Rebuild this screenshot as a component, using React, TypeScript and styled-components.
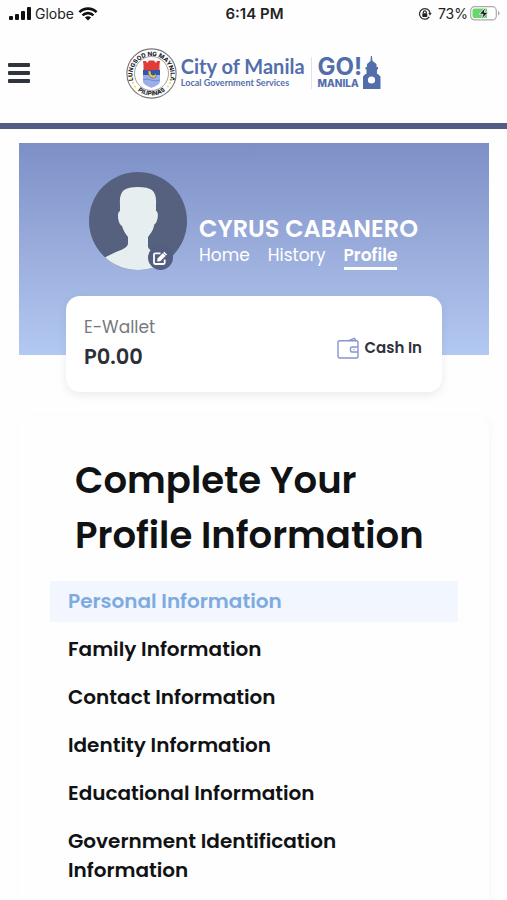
import React from "react";
import styled, { createGlobalStyle } from "styled-components";

const GlobalStyle = createGlobalStyle`
  *, *::before, *::after { box-sizing: border-box; }
  body {
    margin: 0;
    background: #fefefe;
    color: #101214;
    font-family: Poppins, Inter, sans-serif;
  }
  h1, h2, p, ul { margin: 0; padding: 0; }
  a { color: inherit; text-decoration: none; }
  button { font: inherit; color: inherit; border: 0; padding: 0; background: none; cursor: pointer; }
  svg { display: block; flex: none; }
`;

const StatusBar = styled.div`
  display: grid;
  grid-template-columns: 1fr auto 1fr;
  align-items: center;
  height: 27px;
  padding: 0 7px 0 9px;
  font-family: Inter, sans-serif;
  font-size: 14px;
  color: #222;
`;

const StatusGroup = styled.div<{ $end?: boolean }>`
  display: flex;
  align-items: center;
  justify-content: ${(p) => (p.$end ? "flex-end" : "flex-start")};
  gap: ${(p) => (p.$end ? 2 : 4)}px;
`;

const LockIconSlot = styled.span`
  margin-right: 4px;
`;

const Clock = styled.time`
  font-size: 15px;
  font-weight: 600;
`;

const Header = styled.header`
  display: grid;
  grid-template-columns: 1fr auto 1fr;
  align-items: center;
  height: 102px;
  padding: 0 8px 4px;
  border-bottom: 6px solid #535d82;
`;

const MenuButton = styled.button`
  justify-self: start;
`;

const Brand = styled.a`
  display: flex;
  align-items: center;
  color: #536fab;
  font-family: Lato, sans-serif;
  font-weight: 700;
`;

const CityName = styled.span`
  display: flex;
  flex-direction: column;
  margin-left: 4px;
  padding-right: 6px;
  white-space: nowrap;
`;

const CityTitle = styled.span`
  font-size: 20px;
  line-height: 20px;
  font-weight: 700;
`;

const CitySubtitle = styled.span`
  font-size: 9px;
  line-height: 14px;
`;

const GoManila = styled.span`
  display: flex;
  flex-direction: column;
  padding-left: 6px;
  border-left: 1px solid #dde2f0;
  font-family: Inter, sans-serif;
`;

const GoText = styled.span`
  font-size: 24px;
  line-height: 20px;
  font-weight: 700;
`;

const ManilaText = styled.span`
  font-size: 10px;
  line-height: 12px;
  font-weight: 800;
`;

const Main = styled.main`
  padding: 14px 18px 0 19px;
`;

const Hero = styled.section`
  display: flex;
  align-items: flex-start;
  gap: 12px;
  height: 212px;
  padding: 29px 20px 0 70px;
  color: #fff;
  background: linear-gradient(#7c90c7, #9aacdb 50%, #b2c9f2);
`;

const Avatar = styled.div`
  position: relative;
  flex: none;
`;

const EditButton = styled.button`
  position: absolute;
  right: 14px;
  bottom: 0;
  display: grid;
  place-items: center;
  width: 25px;
  height: 25px;
  border-radius: 50%;
  background: #535e80;
`;

const Identity = styled.div`
  padding-top: 42px;
  white-space: nowrap;
`;

const UserName = styled.h1`
  font-size: 24px;
  line-height: 29px;
  font-weight: 600;
`;

const Tabs = styled.nav`
  display: flex;
  gap: 18px;
`;

const Tab = styled.a<{ $active?: boolean }>`
  font-size: 17px;
  line-height: 24px;
  font-weight: ${(p) => (p.$active ? 600 : 400)};
  border-bottom: 3px solid ${(p) => (p.$active ? "#fff" : "transparent")};
`;

const Wallet = styled.section`
  position: relative;
  display: flex;
  align-items: center;
  justify-content: space-between;
  margin: -59px 47px 0;
  padding: 16px 20px 20px 18px;
  border-radius: 14px;
  background: #fff;
  box-shadow: 0 3px 8px rgba(60, 70, 100, 0.1);
`;

const WalletLabel = styled.p`
  font-size: 17px;
  line-height: 30px;
  color: #77797d;
`;

const Balance = styled.p`
  font-size: 21px;
  line-height: 30px;
  font-weight: 600;
  color: #2c3038;
`;

const CashIn = styled.button`
  display: flex;
  align-items: center;
  gap: 6px;
  padding-top: 12px;
  font-size: 15px;
  line-height: 22px;
  font-weight: 600;
  color: #2f333c;
`;

const ProfilePanel = styled.section`
  margin-top: 24px;
  padding: 37px 31px 24px;
  border-radius: 14px;
  background: #fefefe;
  box-shadow: 2px 3px 8px rgba(90, 120, 180, 0.05);
`;

const PanelTitle = styled.h2`
  padding: 0 25px;
  font-size: 37px;
  line-height: 55px;
  font-weight: 600;
  white-space: nowrap;
`;

const SectionList = styled.ul`
  display: flex;
  flex-direction: column;
  gap: 7px;
  margin-top: 18px;
  list-style: none;
`;

const SectionLink = styled.a<{ $active?: boolean }>`
  display: block;
  padding: 6px 90px 6px 18px;
  font-size: 20px;
  line-height: 29px;
  font-weight: 600;
  color: ${(p) => (p.$active ? "#7eabdf" : "#101214")};
  background: ${(p) => (p.$active ? "#f2f6fe" : "transparent")};
`;

const SignalIcon = () => (
  <svg width="22" height="14" viewBox="0 0 22 14" fill="#111" aria-hidden="true">
    <rect x="0" y="9" width="4" height="4" rx="1" />
    <rect x="6" y="7" width="4" height="6" rx="1" />
    <rect x="12" y="4" width="4" height="9" rx="1" />
    <rect x="18" y="0" width="4" height="13" rx="1" />
  </svg>
);

const WifiIcon = () => (
  <svg width="20" height="14" viewBox="0 0 20 14" fill="none" stroke="#111" strokeWidth="2.6" aria-hidden="true">
    <path d="M1.4 5.2C6.2.4 13.8.4 18.6 5.2M4.5 8.4c3.1-3 7.9-3 11 0" />
    <path d="M10 13.6 6.9 10.5c1.8-1.7 4.4-1.7 6.2 0Z" fill="#111" stroke="none" />
  </svg>
);

const RotationLockIcon = () => (
  <svg width="14" height="14" viewBox="0 0 14 14" fill="none" stroke="#333" strokeWidth="1.3" aria-hidden="true">
    <path d="M11.2 9.8A5.3 5.3 0 1 1 12 6" />
    <path d="m10.3 5.8 3.4.1-1.8 2.8Z" fill="#333" stroke="none" />
    <rect x="4.3" y="6.2" width="5" height="3.8" rx=".7" fill="#222" stroke="none" />
    <path d="M5.3 6.5V5.4a1.5 1.5 0 0 1 3 0v1.1" />
  </svg>
);

const BatteryIcon = () => (
  <svg width="30" height="15" viewBox="0 0 30 15" aria-hidden="true">
    <rect x=".7" y=".7" width="25.6" height="13.2" rx="4" fill="#fff" stroke="#aaa" strokeWidth="1.2" />
    <path d="M4.5 2.5H17v9.6H4.5a2 2 0 0 1-2-2V4.5a2 2 0 0 1 2-2Z" fill="#68d56e" />
    <path d="M28 5v4.500c2-.7 2-3.800 0-4.500Z" fill="#aaa" />
    <path d="m15.800 1.200-6.500 7h3.900l-2 5.300 7-7.200h-4Z" fill="#111" stroke="#fff" strokeWidth=".8" />
  </svg>
);

const MenuIcon = () => (
  <svg width="22" height="20" viewBox="0 0 22 20" fill="#30343e" aria-hidden="true">
    <rect y="0" width="22" height="4" rx="1" />
    <rect y="8" width="22" height="4" rx="1" />
    <rect y="16" width="22" height="4" rx="1" />
  </svg>
);

const CitySeal = () => (
  <svg width="51" height="51" viewBox="0 0 51 51" role="img" aria-label="Seal of Manila">
    <defs>
      <path id="sealTop" d="M7.500 33A19 19 0 1 1 43.500 33" />
      <path id="sealBottom" d="M6 36A22.300 22.300 0 0 0 45 36" />
    </defs>
    <circle cx="25.500" cy="25.500" r="24.600" fill="#fff" stroke="#777" strokeWidth="1.100" />
    <circle cx="25.500" cy="25.500" r="17" fill="#fff" stroke="#888" strokeWidth=".8" />
    <g fontFamily="Inter, sans-serif" fontSize="6" fontWeight="800" fill="#25282e" textAnchor="middle">
      <text><textPath href="#sealTop" startOffset="50%">LUNGSOD NG MAYNILA</textPath></text>
      <text><textPath href="#sealBottom" startOffset="50%">PILIPINAS</textPath></text>
    </g>
    <g fill="#e9de52">
      <circle cx="5" cy="31" r="1" /><circle cx="7" cy="35" r="1" /><circle cx="9" cy="38.500" r="1" />
      <circle cx="46" cy="31" r="1" /><circle cx="44" cy="35" r="1" /><circle cx="42" cy="38.500" r="1" />
    </g>
    <path d="M17.500 24v-7L17 13h3l1 2 2-2.500h5l2 2.500 1-2h3l-.500 4v7Z" fill="#df3c3a" />
    <path d="M17 22h17v5H17Z" fill="#325aa9" />
    <path d="M17 27h17v6c0 4-5 5-8.500 7C22 38 17 37 17 33Z" fill="#9cafe8" />
    <path d="M17 32q4-2 8 0t9 0" fill="none" stroke="#7189d4" />
    <path d="M22 23q2-1 3 1v2q3 3 5-1 1 6-3 5-5-1-5-7Z" fill="#f1c84a" stroke="#31446d" strokeWidth=".5" />
  </svg>
);

const ClockTower = () => (
  <svg width="19" height="34" viewBox="0 0 19 34" fill="#536fab" aria-hidden="true">
    <path d="M8.900 0h1l.6 5 4 3v3h1.500v2.500h-1V18h1l2.500 2.500V33H1V20.500L3.500 18h1v-4.500h-1V11H5V8l3.500-3Z" />
    <circle cx="9.500" cy="24" r="3.600" fill="#fff" />
  </svg>
);

const Portrait = () => (
  <svg width="98" height="98" viewBox="0 0 98 98" role="img" aria-label="Profile photo">
    <clipPath id="portraitClip"><circle cx="49" cy="49" r="49" /></clipPath>
    <circle cx="49" cy="49" r="49" fill="#56617f" />
    <path
      clipPath="url(#portraitClip)"
      fill="#e7eef0"
      d="M31 33C30 19 35 15 49 15s19 4 18 18v6c3 1 2 8 0 12-1 1-2 1-2 3-1 5-4 8-6 11v10c2 5 9 6 15 9 5 2 10 4 12 8v8H10v-9c5-6 11-8 17-11 5-2 11-4 12-8V65c-3-4-5-7-6-11-1-1-2-1-3-4-1-3-2-10 1-11Z"
    />
  </svg>
);

const EditIcon = () => (
  <svg width="15" height="14" viewBox="0 0 15 14" fill="none" stroke="#fff" strokeWidth="1.800" aria-hidden="true">
    <path d="M7.500 2.300H2.200Q1 2.300 1 3.500v8.300Q1 13 2.200 13h8.300q1.200 0 1.200-1.200V8.500" />
    <path d="m4.500 7.500 6.800-6.800 2.700 2.700-6.800 6.800-3 .4Z" fill="#fff" stroke="none" />
    <path d="m10 1.800 3 3" stroke="#56617f" strokeWidth=".7" />
  </svg>
);

const WalletIcon = () => (
  <svg width="22" height="22" viewBox="0 0 22 22" fill="none" stroke="#8794d2" strokeWidth="1.400" strokeLinejoin="round" aria-hidden="true">
    <rect x="1" y="3.800" width="20" height="17.200" rx="1.800" />
    <path d="m11 3.800 6.500-2.500 1.700 2.500M21 10h-6a1.500 1.500 0 0 0-1.500 1.500v2A1.500 1.500 0 0 0 15 15h6M16.500 12.500h1" />
  </svg>
);

const tabs = ["Home", "History", "Profile"];

const sections = [
  "Personal Information",
  "Family Information",
  "Contact Information",
  "Identity Information",
  "Educational Information",
  "Government Identification Information",
];

export default function App() {
  return (
    <>
      <GlobalStyle />
      <StatusBar>
        <StatusGroup>
          <SignalIcon />
          <span>Globe</span>
          <WifiIcon />
        </StatusGroup>
        <Clock>6:14 PM</Clock>
        <StatusGroup $end>
          <LockIconSlot><RotationLockIcon /></LockIconSlot>
          <span>73%</span>
          <BatteryIcon />
        </StatusGroup>
      </StatusBar>
      <Header>
        <MenuButton type="button" aria-label="Open menu"><MenuIcon /></MenuButton>
        <Brand href="#home">
          <CitySeal />
          <CityName>
            <CityTitle>City of Manila</CityTitle>
            <CitySubtitle>Local Government Services</CitySubtitle>
          </CityName>
          <GoManila>
            <GoText>GO!</GoText>
            <ManilaText>MANILA</ManilaText>
          </GoManila>
          <ClockTower />
        </Brand>
      </Header>
      <Main>
        <Hero>
          <Avatar>
            <Portrait />
            <EditButton type="button" aria-label="Edit photo"><EditIcon /></EditButton>
          </Avatar>
          <Identity>
            <UserName>CYRUS CABANERO</UserName>
            <Tabs>
              {tabs.map((tab) => (
                <Tab key={tab} href={`#${tab.toLowerCase()}`} $active={tab === "Profile"}>{tab}</Tab>
              ))}
            </Tabs>
          </Identity>
        </Hero>
        <Wallet>
          <div>
            <WalletLabel>E-Wallet</WalletLabel>
            <Balance>P0.00</Balance>
          </div>
          <CashIn type="button"><WalletIcon />Cash In</CashIn>
        </Wallet>
        <ProfilePanel>
          <PanelTitle>Complete Your<br />Profile Information</PanelTitle>
          <SectionList>
            {sections.map((name, i) => (
              <li key={name}>
                <SectionLink href={`#section-${i + 1}`} $active={i === 0}>{name}</SectionLink>
              </li>
            ))}
          </SectionList>
        </ProfilePanel>
      </Main>
    </>
  );
}
